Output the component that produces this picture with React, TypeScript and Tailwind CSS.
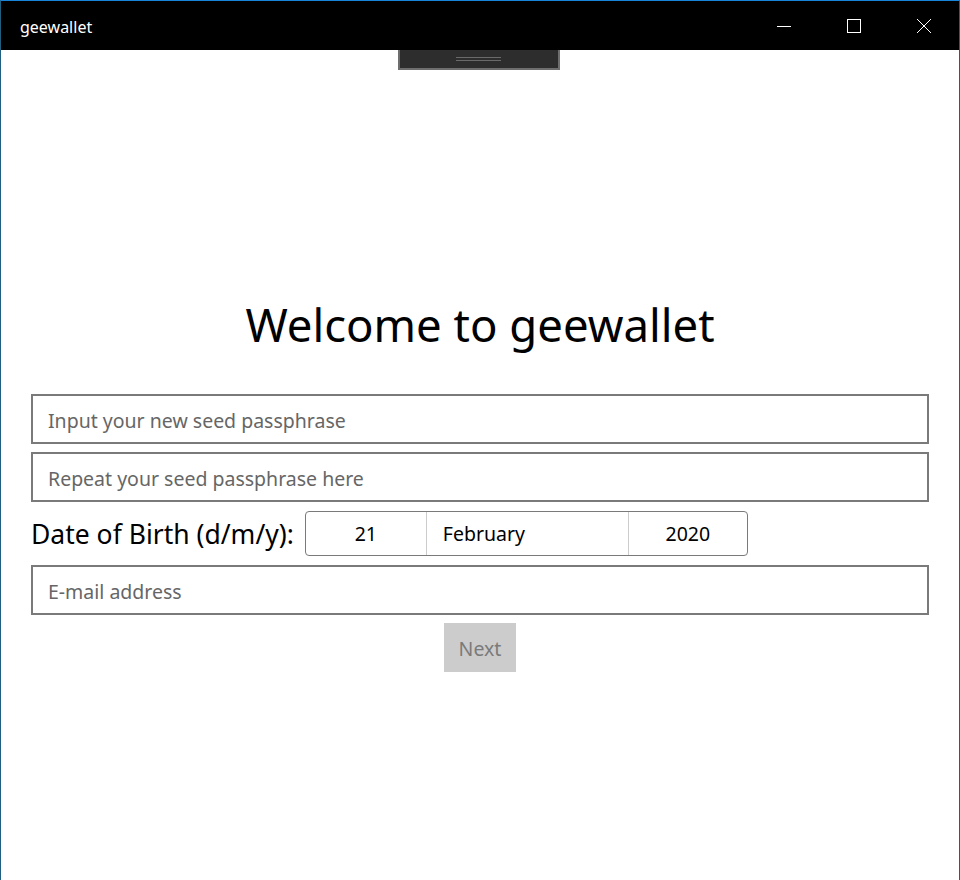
import React from "react"

const font = { fontFamily: '"Noto Sans", "Open Sans", sans-serif' }

function TitleBar() {
    return (
        <div className="h-[49px] bg-black flex items-center text-white">
            <span className="pl-[19px] pt-[3px] text-[16px] flex-1">geewallet</span>
            <div className="flex h-full">
                <button className="w-[70px] h-full flex items-center justify-center">
                    <svg width="16" height="16" viewBox="0 0 16 16">
                        <path d="M1 8.5h14" stroke="white" strokeWidth="1" />
                    </svg>
                </button>
                <button className="w-[70px] h-full flex items-center justify-center">
                    <svg width="16" height="16" viewBox="0 0 16 16">
                        <rect x="1.5" y="1.5" width="13" height="13" fill="none" stroke="white" strokeWidth="1" />
                    </svg>
                </button>
                <button className="w-[70px] h-full flex items-center justify-center">
                    <svg width="16" height="16" viewBox="0 0 16 16">
                        <path d="M1 1L15 15M15 1L1 15" stroke="white" strokeWidth="1" />
                    </svg>
                </button>
            </div>
        </div>
    )
}

function TextBox({ placeholder, className = "" }: { placeholder: string; className?: string }) {
    return (
        <input
            placeholder={placeholder}
            className={`w-full h-[50px] border-2 border-[#7a7a7a] bg-white px-[15px] pt-[3px] text-[19.5px] text-black placeholder:text-[#666666] outline-none ${className}`}
        />
    )
}

function DatePicker() {
    return (
        <div className="flex h-[45px] w-[443px] border border-[#7a7a7a] rounded-[4px] text-[19.5px] text-black">
            <div className="w-[121px] flex items-center justify-center border-r border-[#cccccc]">21</div>
            <div className="w-[202px] flex items-center pl-[16px] border-r border-[#cccccc]">February</div>
            <div className="flex-1 flex items-center justify-center">2020</div>
        </div>
    )
}

export default function App() {
    return (
        <div className="w-[960px] h-[880px] bg-white border-t border-[#1883d7] border-l border-l-[#1f5f80] border-r border-r-[#1f5f80] flex flex-col overflow-hidden" style={font}>
            <TitleBar />
            <div className="flex-1 flex flex-col">
                <div className="flex justify-center">
                    <div className="-ml-[3px] w-[162px] h-[20px] bg-[#2d2d2d] border-2 border-t-0 border-[#6e6e6e] flex items-center justify-center">
                        <div className="w-[45px] h-[4px] border-y border-[#6a6a6a]" />
                    </div>
                </div>
                <h1 className="mt-[226px] text-center text-[45.5px] leading-[56px] text-black">Welcome to geewallet</h1>
                <div className="mt-[42px] px-[30px] flex flex-col gap-[8px]">
                    <TextBox placeholder="Input your new seed passphrase" />
                    <TextBox placeholder="Repeat your seed passphrase here" />
                    <div className="flex items-center gap-[11px] mt-[1px]">
                        <span className="text-[26.5px] text-black pt-[2px]">Date of Birth (d/m/y):</span>
                        <DatePicker />
                    </div>
                    <TextBox placeholder="E-mail address" className="mt-[1px]" />
                    <div className="flex justify-center">
                        <button className="w-[72px] h-[49px] bg-[#cccccc] text-[#7a7a7a] text-[19.5px] pt-[2px]">Next</button>
                    </div>
                </div>
            </div>
        </div>
    )
}
